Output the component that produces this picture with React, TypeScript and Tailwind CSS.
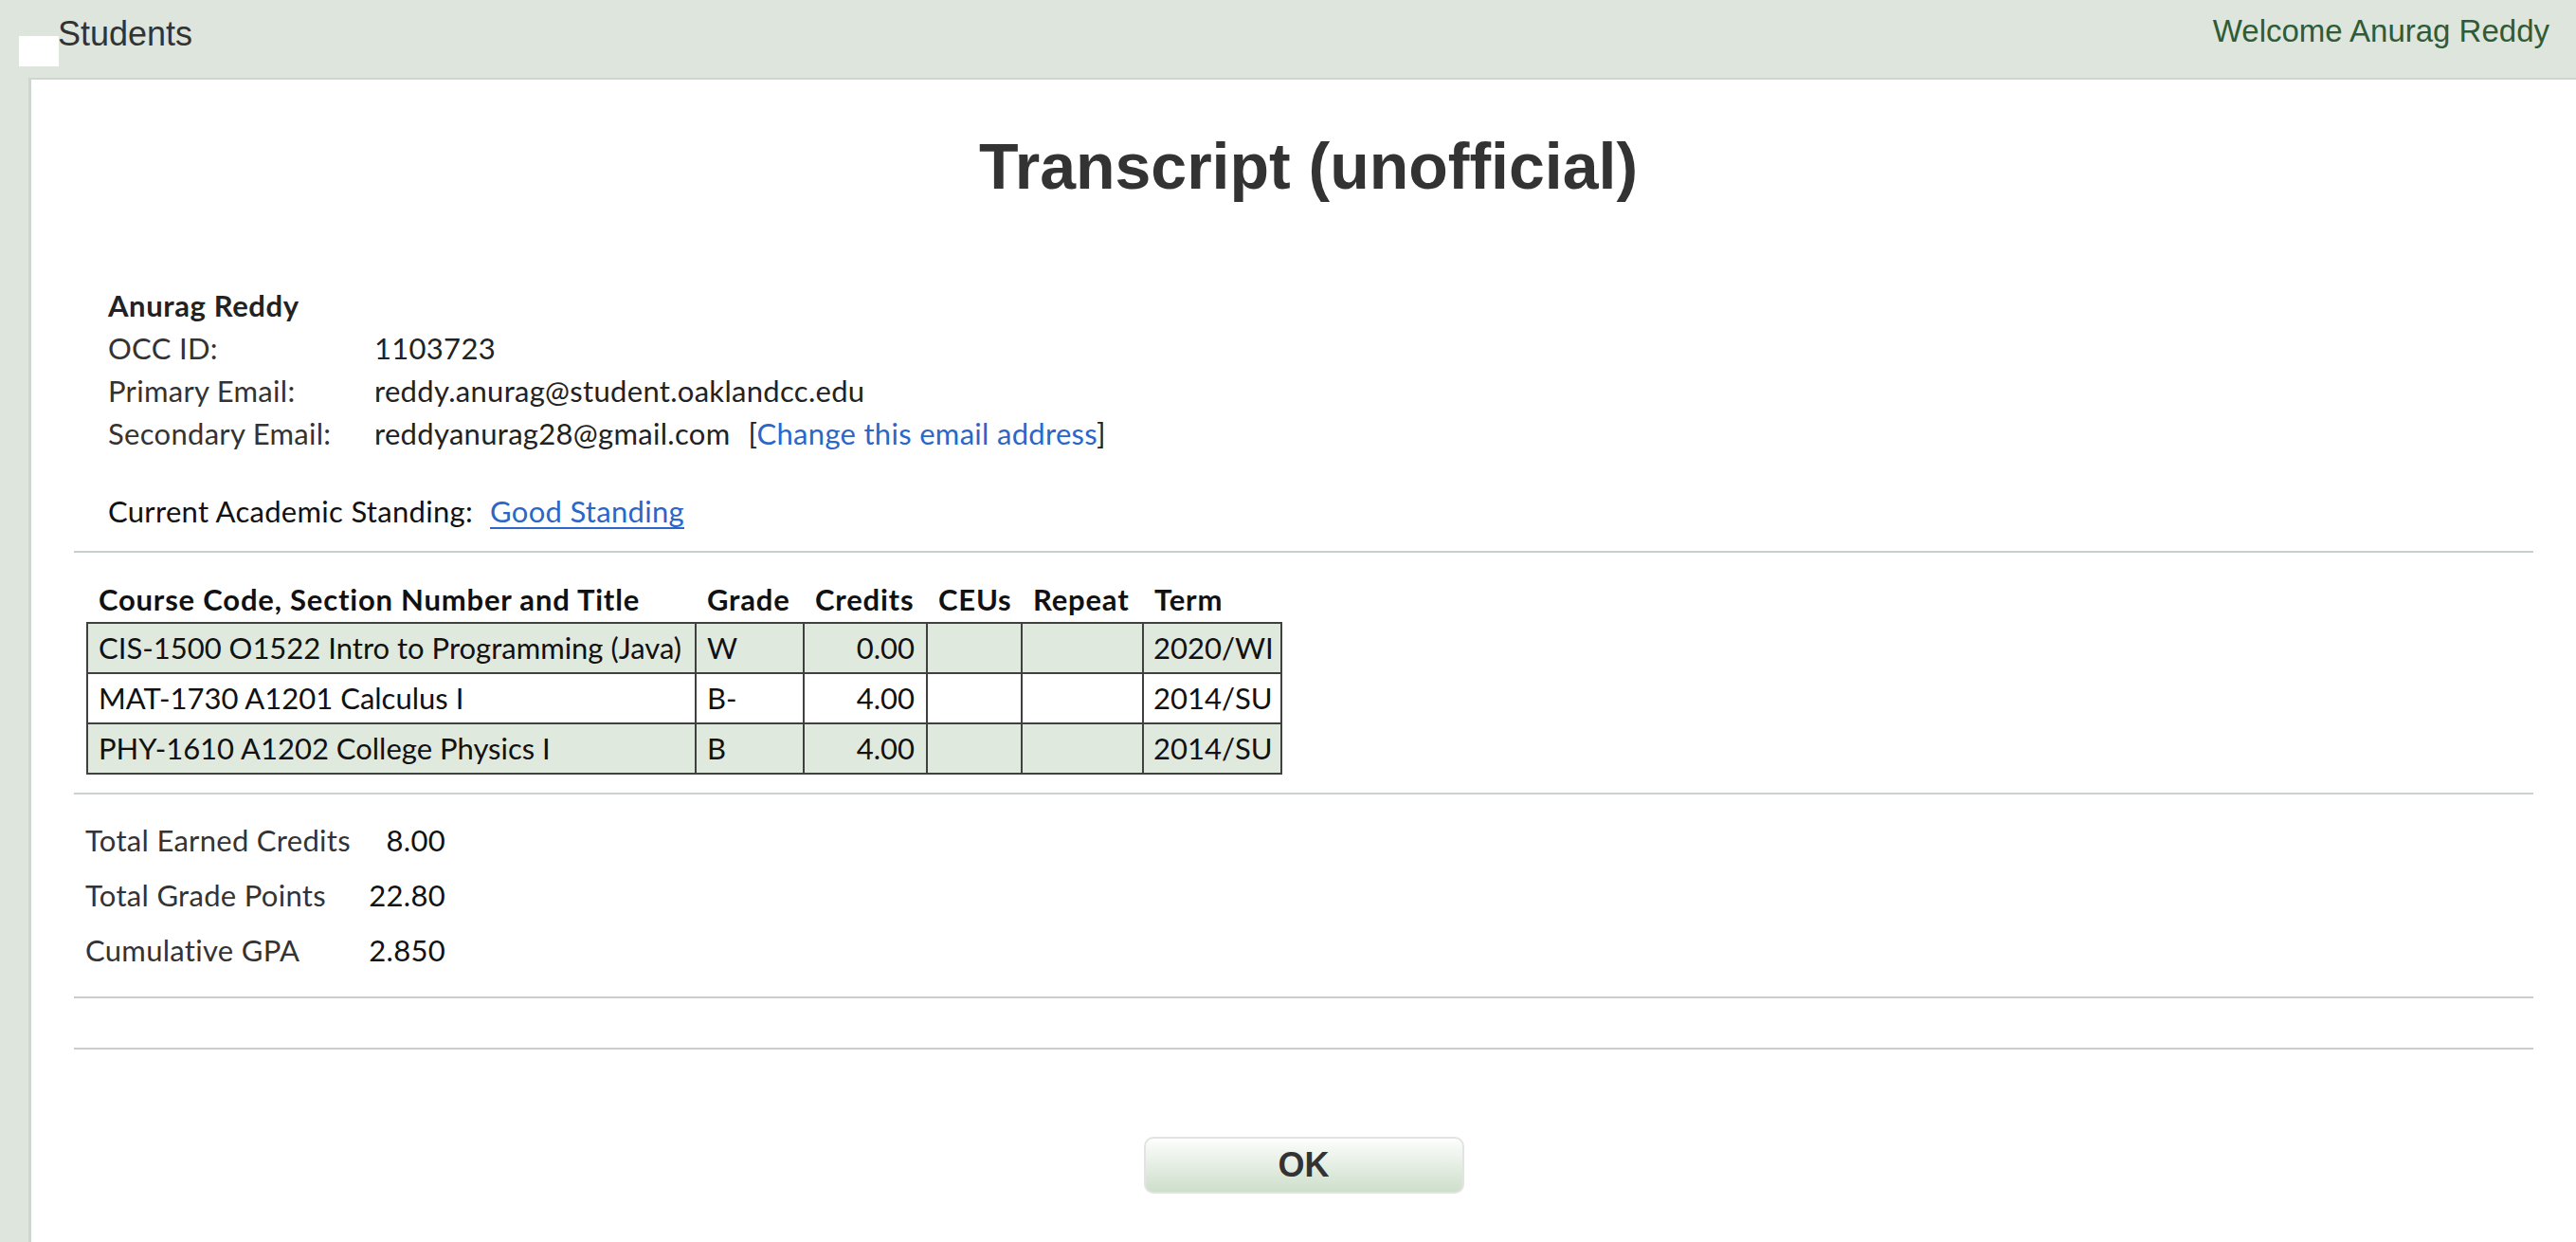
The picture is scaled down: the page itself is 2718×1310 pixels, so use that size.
import React from "react";

const rows = [
  { course: "CIS-1500 O1522 Intro to Programming (Java)", grade: "W", credits: "0.00", term: "2020/WI", shade: true },
  { course: "MAT-1730 A1201 Calculus I", grade: "B-", credits: "4.00", term: "2014/SU", shade: false },
  { course: "PHY-1610 A1202 College Physics I", grade: "B", credits: "4.00", term: "2014/SU", shade: true },
];

export default function App() {
  const av = "font-['Lato','Noto_Sans',sans-serif]";
  return (
    <div className="relative flex h-[1310px] w-full flex-col bg-[#dde5dc] font-['Liberation_Sans',Arial,sans-serif]">
      <div className="flex h-[82px] shrink-0 items-start justify-between">
        <div className="pl-[61px] pt-[18px] text-[36px] leading-[36px] text-[#333]">Students</div>
        <div className="pr-[28px] pt-[16px] text-[33px] leading-[33px] text-[#2f5b36]">Welcome Anurag Reddy</div>
      </div>
      <div className="absolute left-[20px] top-[38px] h-[32px] w-[42px] bg-white" />
      <div className="ml-[30px] flex flex-1 flex-col border-l-[3px] border-t-2 border-[#cfd6cf] bg-white">
        <h1 className="mt-[57px] pl-[10px] text-center text-[68px] font-bold leading-[68px] text-[#333]">
          Transcript (unofficial)
        </h1>
        <div className={`mx-[45px] mt-[91px] flex flex-col ${av}`}>
          <div className="pl-[36px] text-[31px] tracking-[0.3px] text-[#333]">
            <div className="flex h-[45px] items-center font-bold tracking-[0.6px] text-[#222]">Anurag Reddy</div>
            <div className="flex h-[45px] items-center">
              <span className="w-[281px]">OCC ID:</span>
              <span className="text-[#222]">1103723</span>
            </div>
            <div className="flex h-[45px] items-center">
              <span className="w-[281px]">Primary Email:</span>
              <span className="text-[#222]">reddy.anurag@student.oaklandcc.edu</span>
            </div>
            <div className="flex h-[45px] items-center">
              <span className="w-[281px]">Secondary Email:</span>
              <span className="text-[#222]">reddyanurag28@gmail.com</span>
              <span className="ml-[19px] text-[#222]">
                [<a href="#" className="text-[#2b66c8]">Change this email address</a>]
              </span>
            </div>
            <div className="mt-[37px] flex h-[45px] items-center text-[#111]">
              <span>Current Academic Standing:</span>
              <a href="#" className="ml-[18px] text-[#2b66c8] underline underline-offset-[5px] decoration-2">
                Good Standing
              </a>
            </div>
          </div>
          <div className="mt-[19px] h-[2px] bg-[#c9cfc9]" />
          <table className="ml-[13px] mt-[26px] w-[1260px] table-fixed border-collapse text-[31px] text-[#111]">
            <colgroup>
              <col className="w-[642px]" />
              <col className="w-[114px]" />
              <col className="w-[130px]" />
              <col className="w-[100px]" />
              <col className="w-[128px]" />
              <col className="w-[146px]" />
            </colgroup>
            <thead>
              <tr className="h-[45px] text-left">
                <th className="whitespace-nowrap px-[12px] font-bold tracking-[0.8px]">Course Code, Section Number and Title</th>
                <th className="whitespace-nowrap px-[12px] font-bold tracking-[0.8px]">Grade</th>
                <th className="whitespace-nowrap px-[12px] font-bold tracking-[0.8px]">Credits</th>
                <th className="whitespace-nowrap px-[12px] font-bold tracking-[0.8px]">CEUs</th>
                <th className="whitespace-nowrap px-[12px] font-bold tracking-[0.8px]">Repeat</th>
                <th className="whitespace-nowrap px-[12px] font-bold tracking-[0.8px]">Term</th>
              </tr>
            </thead>
            <tbody>
              {rows.map((r) => (
                <tr key={r.course} className={r.shade ? "bg-[#e0e9de]" : "bg-white"}>
                  <td className="h-[53px] whitespace-nowrap border-2 border-[#404040] px-[11px]">{r.course}</td>
                  <td className="border-2 border-[#404040] px-[11px]">{r.grade}</td>
                  <td className="border-2 border-[#404040] px-[12px] text-right">{r.credits}</td>
                  <td className="border-2 border-[#404040]" />
                  <td className="border-2 border-[#404040]" />
                  <td className="whitespace-nowrap border-2 border-[#404040] px-[10px]">{r.term}</td>
                </tr>
              ))}
            </tbody>
          </table>
          <div className="mt-[19px] h-[2px] bg-[#cbd1cb]" />
          <div className="ml-[12px] mt-[20px] grid grid-cols-[300px_80px] text-[31px] tracking-[0.3px]">
            {[
              ["Total Earned Credits", "8.00"],
              ["Total Grade Points", "22.80"],
              ["Cumulative GPA", "2.850"],
            ].map(([k, v]) => (
              <React.Fragment key={k}>
                <div className="flex h-[58px] items-center whitespace-nowrap text-[#333]">{k}</div>
                <div className="flex h-[58px] items-center justify-end text-[#111]">{v}</div>
              </React.Fragment>
            ))}
          </div>
          <div className="mt-[19px] h-[2px] bg-[#cccccc]" />
          <div className="mt-[52px] h-[2px] bg-[#cccccc]" />
        </div>
        <div className="mt-[92px] flex justify-center">
          <button className="h-[60px] w-[338px] rounded-[10px] border-2 border-[#e3e3e3] bg-linear-to-b from-[#fdfdfd] to-[#cddfca] text-[36px] font-bold leading-none text-[#333] font-['Liberation_Sans',Arial,sans-serif]">
            OK
          </button>
        </div>
      </div>
    </div>
  );
}
